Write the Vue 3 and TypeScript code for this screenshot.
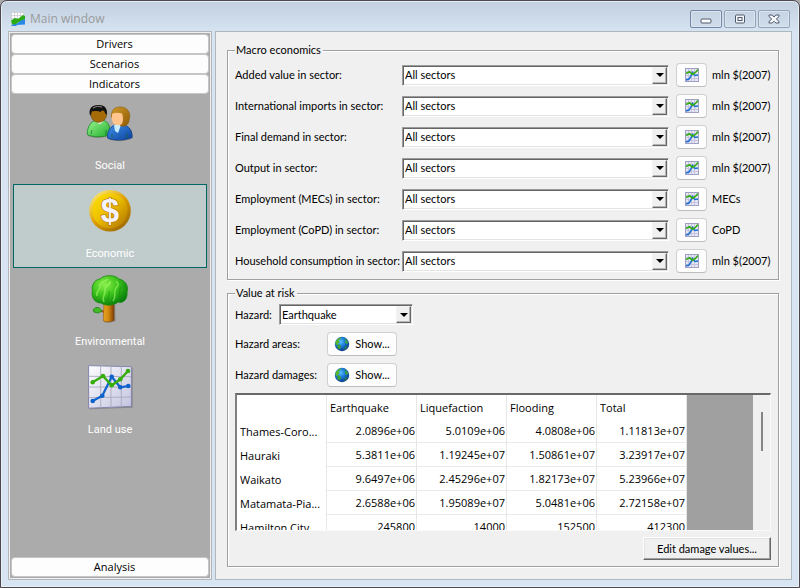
<script setup lang="ts">
import { ref } from 'vue'

interface SectorRow {
  id: string
  label: string
  unit: string
}

const sectorRows: SectorRow[] = [
  { id: 'added', label: 'Added value in sector:', unit: 'mln $(2007)' },
  { id: 'imports', label: 'International imports in sector:', unit: 'mln $(2007)' },
  { id: 'demand', label: 'Final demand in sector:', unit: 'mln $(2007)' },
  { id: 'output', label: 'Output in sector:', unit: 'mln $(2007)' },
  { id: 'mecs', label: 'Employment (MECs) in sector:', unit: 'MECs' },
  { id: 'copd', label: 'Employment (CoPD) in sector:', unit: 'CoPD' },
  { id: 'household', label: 'Household consumption in sector:', unit: 'mln $(2007)' },
]

const columns = ['Earthquake', 'Liquefaction', 'Flooding', 'Total']
const regions: { name: string; values: string[] }[] = [
  { name: 'Thames-Coro...', values: ['2.0896e+06', '5.0109e+06', '4.0808e+06', '1.11813e+07'] },
  { name: 'Hauraki', values: ['5.3811e+06', '1.19245e+07', '1.50861e+07', '3.23917e+07'] },
  { name: 'Waikato', values: ['9.6497e+06', '2.45296e+07', '1.82173e+07', '5.23966e+07'] },
  { name: 'Matamata-Pia...', values: ['2.6588e+06', '1.95089e+07', '5.0481e+06', '2.72158e+07'] },
  { name: 'Hamilton City', values: ['245800', '14000', '152500', '412300'] },
]

const indicators = ['Social', 'Economic', 'Environmental', 'Land use']
const selected = ref('Economic')
const hazard = ref('Earthquake')
</script>

<template>
  <div class="window">
    <svg class="defs" width="0" height="0" aria-hidden="true">
      <defs>
        <linearGradient id="paper" x1="0" y1="0" x2="1" y2="1">
          <stop offset="0" stop-color="#fdfdff" /><stop offset="1" stop-color="#c3c3e0" />
        </linearGradient>
        <radialGradient id="globe" cx="0.4" cy="0.35" r="0.65">
          <stop offset="0" stop-color="#5cc0ff" /><stop offset="0.5" stop-color="#1878d8" /><stop offset="1" stop-color="#0a3a8c" />
        </radialGradient>
        <symbol id="chart" viewBox="0 0 48 48">
          <path d="M3.3 3.3 46.7 4.7V44.7L3.3 46.3Z" fill="#000" opacity="0.2" />
          <path d="M2.6 2.6 45.4 3.7V43.4L2.6 45.2Z" fill="url(#paper)" stroke="#8585ad" stroke-width="1" />
          <path d="M14.7 3V45M25 3V44.500M35.300 3.500V44M3 13.300 45 13.700M3 24H45M3 34.700 45 34" stroke="#a9a9bd" stroke-width="0.900" fill="none" />
          <g fill="#0d62cb" stroke="none">
            <path d="M6.700 38 16.300 32.700 25.700 13.700 34.300 24.300 42.300 23" fill="none" stroke="#0d62cb" stroke-width="2.200" />
            <circle cx="6.700" cy="38" r="2.300" /><circle cx="16.300" cy="32.700" r="2.300" /><circle cx="25.700" cy="13.700" r="2.300" /><circle cx="34.300" cy="24.300" r="2.300" /><circle cx="42.300" cy="23" r="2.300" />
          </g>
          <g fill="#35ad0a">
            <path d="M6.700 19.300 17 13 25.700 22.300 34.300 16.300 42 8" fill="none" stroke="#35ad0a" stroke-width="2.400" />
            <circle cx="6.700" cy="19.300" r="2.300" /><circle cx="17" cy="13" r="2.300" /><circle cx="25.700" cy="22.300" r="2.300" /><circle cx="34.300" cy="16.300" r="2.300" /><circle cx="42" cy="8" r="2.300" />
          </g>
        </symbol>
        <symbol id="chart-small" viewBox="0 0 14 14">
          <rect x="0.500" y="0.500" width="13" height="13" fill="#e6e6f5" stroke="#a0a0c4" />
          <path d="M3.500 1V13M6.500 1V13M9.500 1V13M1 3.500H13M1 7.500H13M1 10.500H13" stroke="#c4c4dc" fill="none" />
          <path d="M1 12 4 11 6 8 7.500 4.500 10 7.500 13 7" stroke="#1c70d2" stroke-width="1.500" fill="none" />
          <path d="M1 5.500 4.500 3.800 7.500 6.200 10.500 4.500 13 1.500" stroke="#35ad10" stroke-width="1.600" fill="none" />
        </symbol>
        <symbol id="earth" viewBox="0 0 16 16">
          <circle cx="8" cy="8" r="7.200" fill="url(#globe)" />
          <path d="M2 5C3 3 5 1.500 7.500 1.200L6 3.500 4.500 4 5.500 6 4 7.500 3.500 9.500 1.200 8Z" fill="#58b828" />
          <path d="M3.500 8.500 6.500 9 7 11 5.500 13.500 3.500 12Z" fill="#3da32c" />
          <path d="M10 2 13 4 14.500 7 12.500 8 10.500 6.500 11.500 4.500Z" fill="#3aa048" />
          <path d="M11 10.500 13.800 10 12 13 10 13.500Z" fill="#257e4c" />
        </symbol>
      </defs>
    </svg>

    <header class="titlebar">
      <svg class="app-icon" viewBox="0 0 14 14" aria-hidden="true">
        <path d="M0 0H13V10H0Z" fill="#fff" />
        <path d="M0.500 0V9M3.500 0V9M6.500 0V9M9.500 0V9M12.500 0V9M0 0.500H13M0 3.500H13M0 6.500H13" stroke="#c4c4cc" stroke-width="0.700" />
        <path d="M0 13 3 12 7 11 9 8 14 7V12.500L6 13 5 14H1Z" fill="#288ae4" />
        <path d="M0 8.500 4 6 7 7 12 3 14 4V7L9 9 5 12 1 12.500Z" fill="#2bac16" />
      </svg>
      <h1>Main window</h1>
      <div class="caption-buttons">
        <button type="button" class="minimize" aria-label="Minimize">
          <svg viewBox="0 0 12 10"><rect x="1" y="5" width="10" height="4" rx="1" fill="#f8fafc" stroke="#51586b" /></svg>
        </button>
        <button type="button" aria-label="Maximize">
          <svg viewBox="0 0 12 10"><rect x="1.500" y="1" width="9" height="8" rx="1" fill="#f4f7fa" stroke="#51586b" /><rect x="4" y="3.500" width="4" height="3" fill="none" stroke="#51586b" /></svg>
        </button>
        <button type="button" aria-label="Close">
          <svg viewBox="0 0 12 10"><path d="M1 1H4.200L6 3 7.800 1H11V2.500L8.300 5 11 7.500V9H7.800L6 7.200 4.200 9H1V7.500L3.700 5 1 2.500Z" fill="#f4f7fa" stroke="#51586b" /></svg>
        </button>
      </div>
    </header>

    <div class="body">
      <nav class="toolbox">
        <div class="toolbox-inner">
          <button type="button" class="tab">Drivers</button>
          <button type="button" class="tab">Scenarios</button>
          <button type="button" class="tab">Indicators</button>
          <div class="indicators">
            <button
              v-for="name in indicators"
              :key="name"
              type="button"
              class="indicator"
              :class="{ active: selected === name }"
              @click="selected = name"
            >
              <svg v-if="name === 'Social'" viewBox="0 0 48 48" aria-hidden="true">
                <defs>
                  <linearGradient id="green-shirt" x1="0" y1="0" x2="1" y2="1"><stop offset="0" stop-color="#9af590" /><stop offset="1" stop-color="#1fae2b" /></linearGradient>
                  <linearGradient id="blue-shirt" x1="0" y1="0" x2="1" y2="1"><stop offset="0" stop-color="#3f8eea" /><stop offset="1" stop-color="#0b429c" /></linearGradient>
                  <linearGradient id="blond" x1="0" y1="0" x2="1" y2="1"><stop offset="0" stop-color="#d09a2a" /><stop offset="1" stop-color="#8f5a04" /></linearGradient>
                </defs>
                <path d="M2 37C1 28 5 22 10 21.500H17C23 22 25 29 24.500 36 18 39.500 8 39.500 2 37Z" fill="#000" opacity="0.25" />
                <path d="M1.300 35.500C1 28 5 22 10 21.500H17C22 22 25 28 24 35.500 18 38.500 7 38.500 1.300 35.500Z" fill="url(#green-shirt)" stroke="#1b8a24" stroke-width="0.800" />
                <path d="M10 21.500Q13.500 28 17.500 22L16 20H11Z" fill="#fff" />
                <ellipse cx="12.700" cy="15" rx="8" ry="8.500" fill="#a56b08" stroke="#5d3a02" stroke-width="0.500" />
                <path d="M4.300 17C1.500 9 7 5.500 13 6 19 6 22 10 20.700 16L19 14C18 11 16 11 14.500 13 11 11 7 13 6 12Z" fill="#131313" />
                <path d="M7 9Q11 6 16 8" stroke="#888" fill="none" />
                <path d="M22.500 40C21 32 25 27 30 26H38C44 27 47 33 46.700 39 39 43 29 43 22.500 40Z" fill="#000" opacity="0.25" />
                <path d="M21.500 39C21 31 25 27 30 26H38C43 27 46.500 32 46 38.500 39 41.500 28 42 21.500 39Z" fill="url(#blue-shirt)" stroke="#0b3c91" stroke-width="0.800" />
                <path d="M28 26 29 32 32 34 35 26Z" fill="#c8edff" />
                <path d="M25.300 18C25 10 30 7.500 35 8 42 8.500 45 14 43.300 20 43 25 40 28 35 27Z" fill="url(#blond)" stroke="#8a5a0a" stroke-width="0.600" />
                <path d="M26 15Q30 13 36 14.500 38 20 36 25 31 28 27 24Q25 20 26 15Z" fill="#ffc58c" />
                <path d="M5 35 6 31M20 36V31M26 39V35M41 39V34" stroke="#17692e" stroke-width="0.700" />
              </svg>
              <svg v-else-if="name === 'Economic'" viewBox="0 0 48 48" aria-hidden="true">
                <defs>
                  <linearGradient id="rim" x1="0.100" y1="0" x2="0.900" y2="1"><stop offset="0" stop-color="#fff07a" /><stop offset="0.500" stop-color="#dc9c00" /><stop offset="1" stop-color="#906000" /></linearGradient>
                  <linearGradient id="coin" x1="0" y1="0" x2="1" y2="1"><stop offset="0" stop-color="#ffe600" /><stop offset="0.450" stop-color="#edbf00" /><stop offset="1" stop-color="#ad7000" /></linearGradient>
                </defs>
                <circle cx="24" cy="23.800" r="20.800" fill="url(#rim)" />
                <circle cx="24" cy="23.800" r="17.600" fill="url(#coin)" />
                <text x="24" y="35" class="dollar" text-anchor="middle">$</text>
              </svg>
              <svg v-else-if="name === 'Environmental'" viewBox="0 0 48 48" aria-hidden="true">
                <defs>
                  <linearGradient id="trunk" x1="0" y1="0" x2="1" y2="0"><stop offset="0" stop-color="#e9a51e" /><stop offset="0.500" stop-color="#d08710" /><stop offset="1" stop-color="#7e3c08" /></linearGradient>
                  <radialGradient id="crown" cx="0.350" cy="0.300" r="0.750"><stop offset="0" stop-color="#8af04a" /><stop offset="0.500" stop-color="#3cc31c" /><stop offset="1" stop-color="#067c0b" /></radialGradient>
                </defs>
                <path d="M18 47 19 27H29L29.500 46Q23 49 18 47Z" fill="#000" opacity="0.250" />
                <path d="M12 35 19 37" stroke="#9c5410" stroke-width="2" />
                <path d="M18 26H28V45.500Q23 48 17.300 46Z" fill="url(#trunk)" stroke="#8b4b0a" stroke-width="0.500" />
                <path d="M7 35Q9 31.500 13 32.500L16 36Q12 39.500 8 37Z" fill="#44b929" stroke="#1b8a12" stroke-width="0.800" />
                <path d="M15 28C8 28 5 21 6.500 16 5 10 9 4.500 14 4 18-0.500 29-0.500 33 4 39 5 43 11 41 17 42 24 37 29 32 27 28 31 19 31 15 28Z" fill="url(#crown)" stroke="#188a10" stroke-width="0.800" />
                <path d="M11 21C9 16 15 15 14 11S20 6 22 4M18 27C15 22 20 20 19 15S26 10 24 6M27 26C31 21 27 17 30 13S33 9 30 6" fill="none" stroke="#a5fa70" stroke-width="1.400" opacity="0.600" />
                <path d="M22 27C20 23 25 20 23 16M33 23C35 18 32 16 35 12" fill="none" stroke="#17910c" stroke-width="1.200" opacity="0.600" />
              </svg>
              <svg v-else viewBox="0 0 48 48" aria-hidden="true"><use href="#chart" /></svg>
              <span>{{ name }}</span>
            </button>
          </div>
          <button type="button" class="tab">Analysis</button>
        </div>
      </nav>

      <main class="panel">
        <fieldset class="group">
          <legend>Macro economics</legend>
          <div class="sector-rows">
            <div v-for="row in sectorRows" :key="row.id" class="sector-row">
              <label :for="row.id">{{ row.label }}</label>
              <div class="combo">
                <select :id="row.id"><option>All sectors</option></select>
                <span class="arrow"></span>
              </div>
              <button type="button" class="light" aria-label="Chart">
                <svg class="chart-icon"><use href="#chart-small" /></svg>
              </button>
              <span class="unit">{{ row.unit }}</span>
            </div>
          </div>
        </fieldset>

        <fieldset class="group risk">
          <legend>Value at risk</legend>
          <div class="hazard-rows">
            <div class="hazard-row">
              <label for="hazard" class="hazard-label">Hazard:</label>
              <div class="combo hazard-combo">
                <select id="hazard" v-model="hazard">
                  <option>Earthquake</option>
                  <option>Liquefaction</option>
                  <option>Flooding</option>
                </select>
                <span class="arrow"></span>
              </div>
            </div>
            <div class="hazard-row">
              <label for="show-areas" class="show-label">Hazard areas:</label>
              <button id="show-areas" type="button" class="light show"><svg class="earth-icon"><use href="#earth" /></svg>Show...</button>
            </div>
            <div class="hazard-row">
              <label for="show-damages" class="show-label">Hazard damages:</label>
              <button id="show-damages" type="button" class="light show"><svg class="earth-icon"><use href="#earth" /></svg>Show...</button>
            </div>
          </div>
          <div class="grid-frame">
            <div class="grid-view">
              <table>
                <thead>
                  <tr>
                    <th></th>
                    <th v-for="c in columns" :key="c" scope="col">{{ c }}</th>
                  </tr>
                </thead>
                <tbody>
                  <tr v-for="r in regions" :key="r.name">
                    <th scope="row">{{ r.name }}</th>
                    <td v-for="(v, i) in r.values" :key="i">{{ v }}</td>
                  </tr>
                </tbody>
              </table>
            </div>
            <div class="scroll-track"><div class="scroll-thumb"></div></div>
          </div>
          <button type="button" class="edit">Edit damage values...</button>
        </fieldset>
      </main>
    </div>
  </div>
</template>

<style>
body {
  background: #a8a8a8;
}
</style>

<style scoped>
.window {
  box-sizing: border-box;
  height: 100vh;
  min-height: 560px;
  display: flex;
  flex-direction: column;
  padding: 0 7px 7px;
  border: 1px solid #4c484e;
  border-radius: 7px 7px 0 0;
  background: linear-gradient(#c2cfde, #d7e4f2 32px);
  box-shadow: inset 0 0 0 1px #e6eef7;
  font-family: "Open Sans", "Noto Sans", sans-serif;
  font-size: 11px;
  line-height: 14px;
  color: #000;
}

.window *,
.window *::before {
  box-sizing: border-box;
}

.defs {
  position: absolute;
}

button,
select {
  font: inherit;
  color: inherit;
  margin: 0;
}

button {
  padding: 0;
}

svg {
  display: block;
}

.titlebar {
  flex: none;
  display: flex;
  align-items: center;
  height: 30px;
  padding: 6px 2px 0 3px;
}

.app-icon {
  width: 14px;
  height: 14px;
}

h1 {
  flex: 1;
  margin: 0 0 0 5px;
  font-size: 12px;
  line-height: 16px;
  font-weight: 400;
  color: #999a9c;
}

.caption-buttons {
  display: flex;
  gap: 2px;
}

.caption-buttons button {
  display: flex;
  align-items: center;
  justify-content: center;
  width: 32px;
  height: 18px;
  border: 1px solid #93a2b9;
  border-radius: 2px;
  background: linear-gradient(#c6d3e2, #d0deec);
  box-shadow: inset 0 0 0 1px #dae5f0;
}

.caption-buttons .minimize {
  border-color: #7586a6;
}

.caption-buttons svg {
  width: 12px;
  height: 10px;
}

.body {
  flex: 1;
  min-height: 0;
  display: flex;
  gap: 3px;
}

.toolbox {
  flex: none;
  width: 204px;
  padding: 1px;
  border: 1px solid #b2b6ba;
  background: #f0f0f0;
}

.toolbox-inner {
  height: 100%;
  display: flex;
  flex-direction: column;
  border: 1px solid #ababab;
  background: #ababab;
}

.tab {
  flex: none;
  height: 20px;
  padding: 0 0 0 9px;
  border: 1px solid #c6c6c6;
  border-radius: 4px;
  background: #fdfdfd;
}

.indicators {
  flex: 1;
  display: flex;
  flex-direction: column;
  gap: 4px;
  padding: 2px;
}

.indicator {
  flex: none;
  height: 84px;
  padding: 2px 0 0;
  display: flex;
  flex-direction: column;
  align-items: center;
  border: 1px solid transparent;
  background: none;
  color: #fff;
  font: 11px/16px Roboto, sans-serif;
}

.indicator.active {
  border-color: #006864;
  background: #c0cccb;
}

.indicator svg {
  width: 48px;
  height: 48px;
  margin-bottom: 11px;
}

.dollar {
  font: bold 33px "Liberation Sans", sans-serif;
  fill: #f5f2ff;
  stroke: #c08000;
  stroke-width: 1.5px;
  paint-order: stroke;
}

.panel {
  flex: 1;
  min-width: 0;
  display: flex;
  flex-direction: column;
  gap: 6px;
  padding: 11px 12px 12px 11px;
  border: 1px solid #aeb6be;
  background: #f0f0f0;
  font-family: Lato, Roboto, sans-serif;
}

.group {
  flex: none;
  min-width: 0;
  margin: 0;
  padding: 6px 7px;
  border: 1px solid #a0a0a0;
  box-shadow: 1px 1px #fff, inset 1px 1px #fff;
}

legend {
  margin: 0;
  padding: 0 2px 0 1px;
  background: #f0f0f0;
}

.sector-rows,
.hazard-rows {
  flex: none;
  display: flex;
  flex-direction: column;
  gap: 7px;
}

.sector-row {
  display: grid;
  grid-template-columns: 162px 1fr 31px 64px;
  align-items: center;
  height: 24px;
}

.sector-row label,
.unit {
  white-space: nowrap;
}

.combo {
  display: grid;
  grid-template-columns: 1fr 16px;
  height: 21px;
  border: 1px solid;
  border-color: #9b9b9b #fff #fff #9b9b9b;
  background: #fff;
  box-shadow: inset 1px 1px #656565, inset -1px -1px #e3e3e3;
  margin: 0 7px 0 5px;
}

.combo select {
  grid-area: 1 / 1 / 2 / 3;
  appearance: none;
  min-width: 0;
  padding: 0 18px 0 2px;
  border: 0;
  background: transparent;
}

.arrow {
  grid-area: 1 / 2 / 2 / 3;
  margin: 1px 1px 1px 0;
  display: flex;
  align-items: center;
  justify-content: center;
  border: 1px solid;
  border-color: #f4f4f4 #696969 #696969 #f4f4f4;
  box-shadow: inset -1px -1px #b4b4b4;
  background: #f0f0f0;
  pointer-events: none;
}

.arrow::before {
  content: "";
  border: 4px solid transparent;
  border-top-color: #000;
  border-bottom: 0;
}

.light {
  display: flex;
  align-items: center;
  justify-content: center;
  height: 24px;
  border: 1px solid #d0d0d0;
  border-bottom-color: #bdbdbd;
  border-radius: 4px;
  background: #fdfdfd;
}

.chart-icon {
  width: 14px;
  height: 14px;
}

.unit {
  padding-left: 5px;
}

.risk {
  flex: 1;
  min-height: 0;
  display: flex;
  flex-direction: column;
  gap: 6px;
  padding-top: 4px;
}

.hazard-row {
  display: flex;
  align-items: center;
}

.hazard-label {
  width: 39px;
}

.hazard-combo {
  width: 134px;
}

.show-label {
  width: 92px;
  white-space: nowrap;
}

.show {
  width: 70px;
  gap: 5px;
}

.earth-icon {
  width: 16px;
  height: 16px;
}

.grid-frame {
  flex: 1;
  min-height: 0;
  display: flex;
  overflow: hidden;
  border: 1px solid;
  border-width: 2px 1px 1px 2px;
  border-color: #696969 #fafafa #fafafa #808080;
  background: #a0a0a0;
}

.grid-view {
  flex: 1;
  min-width: 0;
  overflow: hidden;
}

table {
  width: 450px;
  table-layout: fixed;
  border-collapse: separate;
  border-spacing: 0;
  background: #fff;
  font-family: "Open Sans", "Noto Sans", sans-serif;
  font-size: 11px;
  line-height: 16px;
}

th,
td {
  height: 24px;
  padding: 1px 1px 0 3px;
  border-right: 1px solid #e6e6e6;
  white-space: nowrap;
  font-weight: 400;
  text-align: left;
}

td {
  border-bottom: 1px solid #ebebeb;
  text-align: right;
}

.scroll-track {
  flex: none;
  width: 17px;
  padding: 17px 7px 0 8px;
  background: #f0f0f0;
}

.scroll-thumb {
  height: 39px;
  background: #858585;
}

.edit {
  flex: none;
  align-self: flex-end;
  width: 128px;
  height: 23px;
  border: 1px solid;
  border-color: #fff #696969 #696969 #fff;
  box-shadow: inset -1px -1px #a0a0a0, inset 1px 1px #e3e3e3;
  background: #f0f0f0;
}
</style>
